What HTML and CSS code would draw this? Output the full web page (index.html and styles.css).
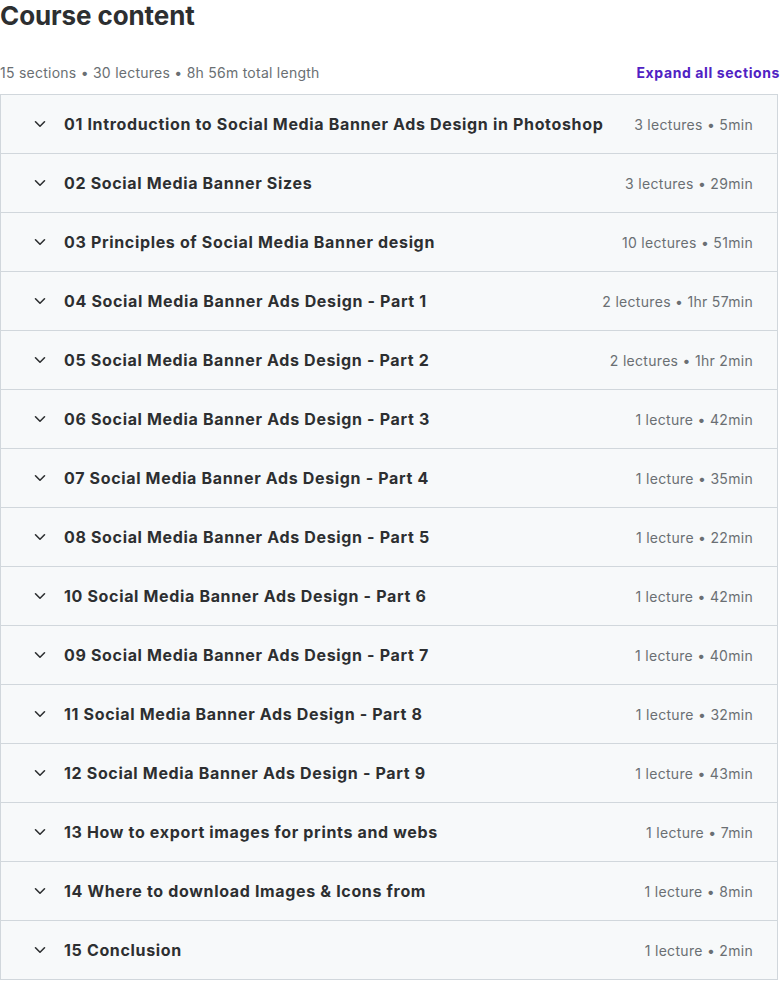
FILE: index.html
```html
<!DOCTYPE html>
<html lang="en">
<head>
<meta charset="utf-8">
<title>Course content</title>
<link rel="stylesheet" href="styles.css">
</head>
<body>
<div class="page">
  <h2 class="title">Course content</h2>
  <div class="meta">
    <span class="summary">15 sections • 30 lectures • 8h 56m total length</span>
    <button class="expand">Expand all sections</button>
  </div>
  <div class="sections">
    <div class="row"><svg class="chev" viewBox="0 0 12 8"><path d="M1.5 1.8 6 6.2l4.5-4.4"/></svg><span class="name">01 Introduction to Social Media Banner Ads Design in Photoshop</span><span class="info">3 lectures • 5min</span></div>
    <div class="row"><svg class="chev" viewBox="0 0 12 8"><path d="M1.5 1.8 6 6.2l4.5-4.4"/></svg><span class="name">02 Social Media Banner Sizes</span><span class="info">3 lectures • 29min</span></div>
    <div class="row"><svg class="chev" viewBox="0 0 12 8"><path d="M1.5 1.8 6 6.2l4.5-4.4"/></svg><span class="name">03 Principles of Social Media Banner design</span><span class="info">10 lectures • 51min</span></div>
    <div class="row"><svg class="chev" viewBox="0 0 12 8"><path d="M1.5 1.8 6 6.2l4.5-4.4"/></svg><span class="name">04 Social Media Banner Ads Design - Part 1</span><span class="info">2 lectures • 1hr 57min</span></div>
    <div class="row"><svg class="chev" viewBox="0 0 12 8"><path d="M1.5 1.8 6 6.2l4.5-4.4"/></svg><span class="name">05 Social Media Banner Ads Design - Part 2</span><span class="info">2 lectures • 1hr 2min</span></div>
    <div class="row"><svg class="chev" viewBox="0 0 12 8"><path d="M1.5 1.8 6 6.2l4.5-4.4"/></svg><span class="name">06 Social Media Banner Ads Design - Part 3</span><span class="info">1 lecture • 42min</span></div>
    <div class="row"><svg class="chev" viewBox="0 0 12 8"><path d="M1.5 1.8 6 6.2l4.5-4.4"/></svg><span class="name">07 Social Media Banner Ads Design - Part 4</span><span class="info">1 lecture • 35min</span></div>
    <div class="row"><svg class="chev" viewBox="0 0 12 8"><path d="M1.5 1.8 6 6.2l4.5-4.4"/></svg><span class="name">08 Social Media Banner Ads Design - Part 5</span><span class="info">1 lecture • 22min</span></div>
    <div class="row"><svg class="chev" viewBox="0 0 12 8"><path d="M1.5 1.8 6 6.2l4.5-4.4"/></svg><span class="name">10 Social Media Banner Ads Design - Part 6</span><span class="info">1 lecture • 42min</span></div>
    <div class="row"><svg class="chev" viewBox="0 0 12 8"><path d="M1.5 1.8 6 6.2l4.5-4.4"/></svg><span class="name">09 Social Media Banner Ads Design - Part 7</span><span class="info">1 lecture • 40min</span></div>
    <div class="row"><svg class="chev" viewBox="0 0 12 8"><path d="M1.5 1.8 6 6.2l4.5-4.4"/></svg><span class="name">11 Social Media Banner Ads Design - Part 8</span><span class="info">1 lecture • 32min</span></div>
    <div class="row"><svg class="chev" viewBox="0 0 12 8"><path d="M1.5 1.8 6 6.2l4.5-4.4"/></svg><span class="name">12 Social Media Banner Ads Design - Part 9</span><span class="info">1 lecture • 43min</span></div>
    <div class="row"><svg class="chev" viewBox="0 0 12 8"><path d="M1.5 1.8 6 6.2l4.5-4.4"/></svg><span class="name">13 How to export images for prints and webs</span><span class="info">1 lecture • 7min</span></div>
    <div class="row"><svg class="chev" viewBox="0 0 12 8"><path d="M1.5 1.8 6 6.2l4.5-4.4"/></svg><span class="name">14 Where to download Images &amp; Icons from</span><span class="info">1 lecture • 8min</span></div>
    <div class="row"><svg class="chev" viewBox="0 0 12 8"><path d="M1.5 1.8 6 6.2l4.5-4.4"/></svg><span class="name">15 Conclusion</span><span class="info">1 lecture • 2min</span></div>
  </div>
</div>
</body>
</html>
```

FILE: styles.css
```css
html, body {
  margin: 0;
  padding: 0;
  background: #ffffff;
}

body {
  font-family: Inter, "Noto Sans", "Liberation Sans", sans-serif;
  color: #2d2f31;
}

.page {
  width: 780px;
}

.title {
  margin: 0;
  padding-top: 0;
  font-size: 26px;
  line-height: 31px;
  font-weight: 700;
  letter-spacing: -0.1px;
  color: #2d2f31;
}

.meta {
  display: flex;
  justify-content: space-between;
  align-items: center;
  height: 22px;
  margin-top: 30px;
  margin-bottom: 11px;
}

.summary {
  font-size: 14px;
  color: #6a6f73;
  letter-spacing: 0.25px;
}

.expand {
  border: none;
  background: none;
  padding: 0;
  font-family: inherit;
  font-size: 14px;
  font-weight: 700;
  color: #5022c3;
  letter-spacing: 0.6px;
  cursor: pointer;
}

.sections {
  width: 776px;
  border: 1px solid #d1d7dc;
  border-bottom: none;
}

.row {
  display: flex;
  align-items: center;
  height: 58px;
  background: #f7f9fa;
  border-bottom: 1px solid #d1d7dc;
  padding: 0 24px 0 33px;
}

.chev {
  width: 12px;
  height: 8px;
  flex: none;
  fill: none;
  stroke: #2d2f31;
  stroke-width: 1.6;
  stroke-linecap: round;
  stroke-linejoin: round;
  margin-right: 18px;
}

.name {
  font-size: 16px;
  font-weight: 700;
  color: #2d2f31;
  flex: 1;
  letter-spacing: 0.66px;
}

.info {
  font-size: 14px;
  color: #6a6f73;
  letter-spacing: 0.3px;
  white-space: nowrap;
}
```
